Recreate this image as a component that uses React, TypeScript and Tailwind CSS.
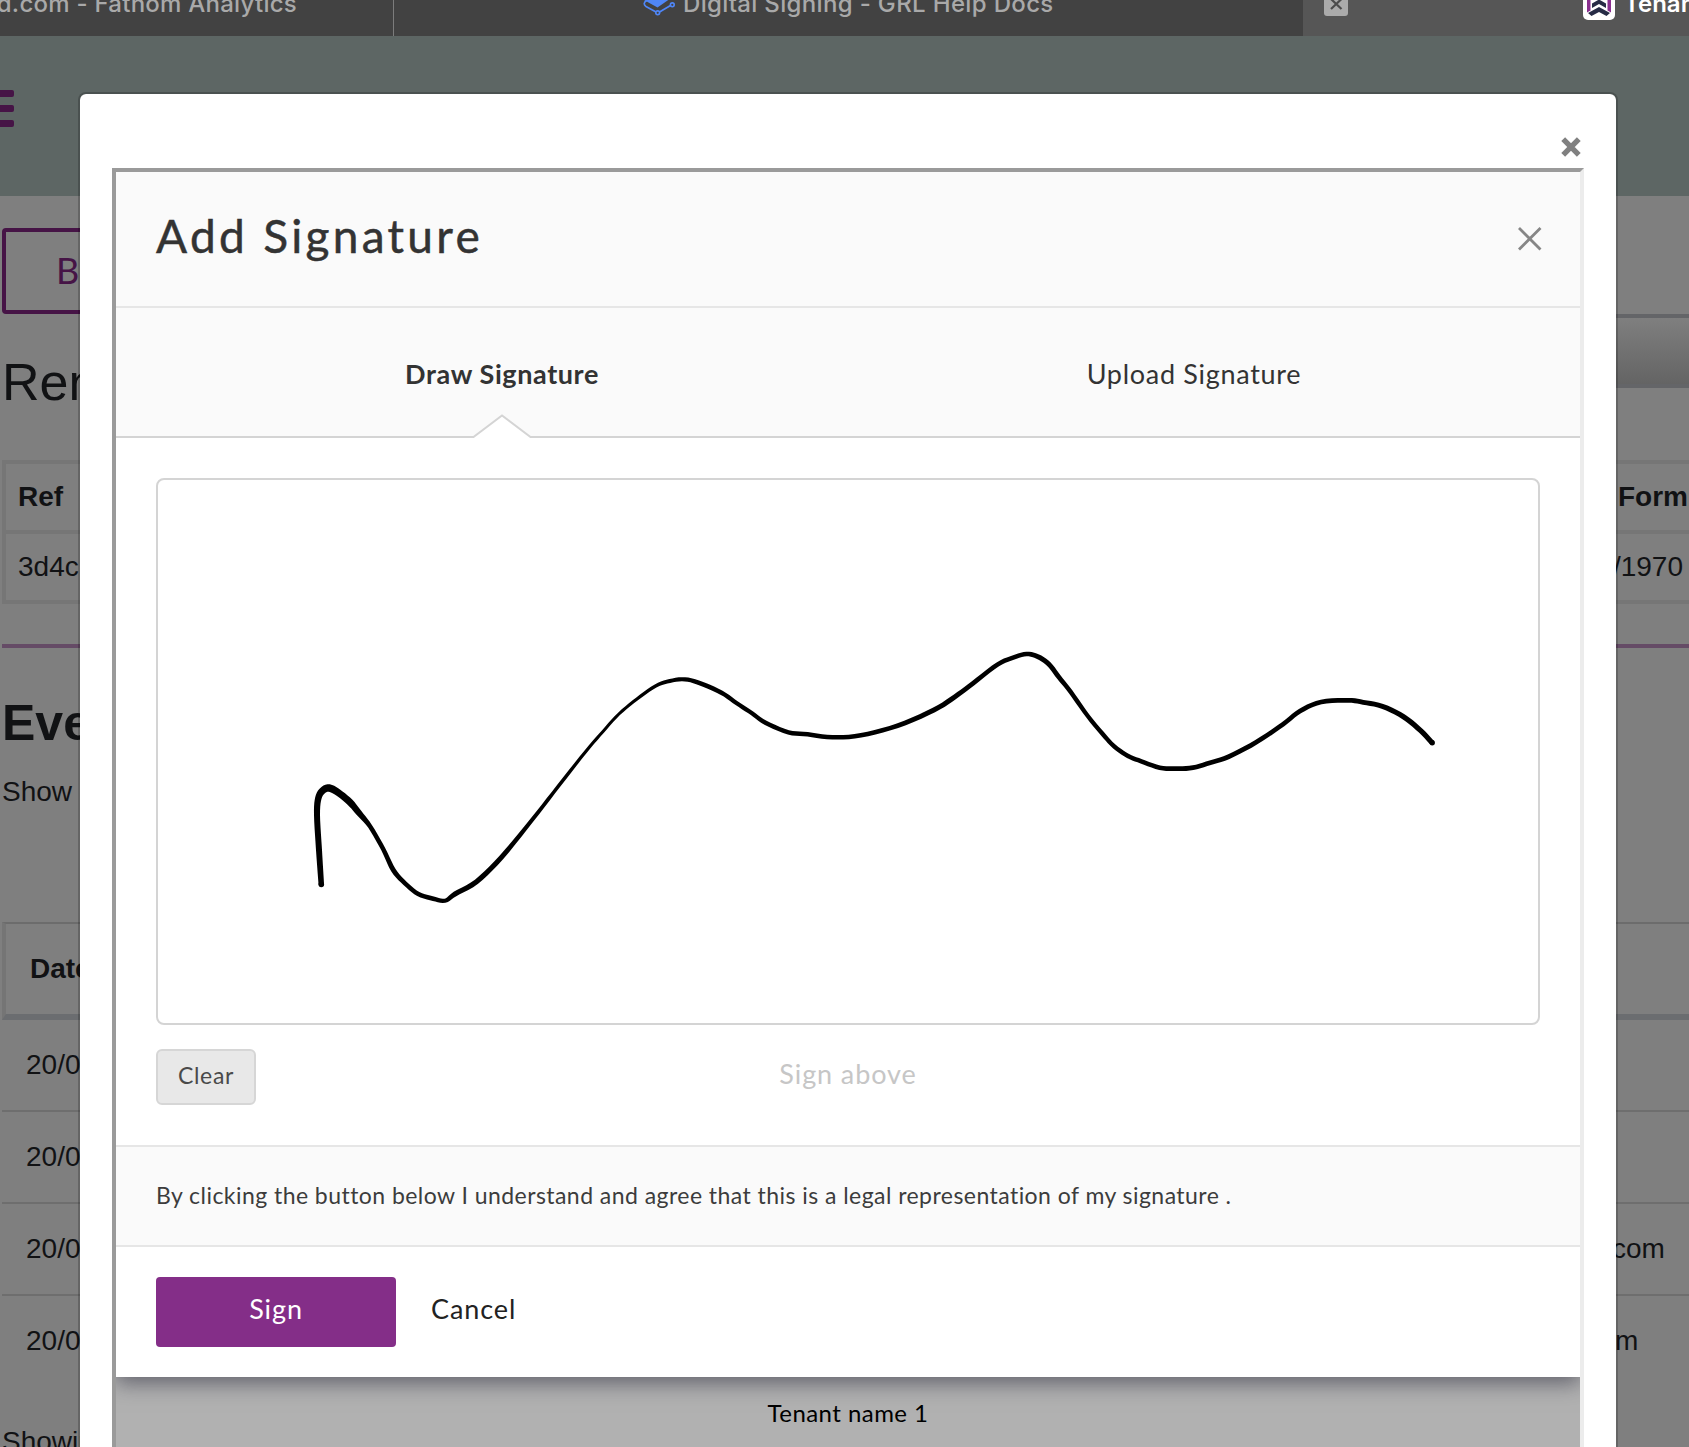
import React from "react";

type Point = [number, number, number];

// x, y and pen width along the signature, in canvas coordinates
const STROKE: Point[] = [
  [321.3, 884.5, 5.5], [319, 850, 6], [317, 815, 6], [318.3, 798.3, 6.5], [322.7, 790.5, 7], [329.3, 788, 7.5],
  [338.3, 792.7, 7], [350, 802.3, 7], [359.3, 813.3, 6], [370, 826.3, 4.5], [383.3, 849.3, 4.5], [393.3, 870, 5],
  [405, 883.3, 4.5], [418.3, 894, 4.5], [433.3, 898.7, 4.5], [445, 900.7, 4], [455, 894, 5], [476.5, 881.7, 5.2],
  [501.4, 857.3, 5], [532, 820, 4], [558.8, 785.7, 3.5], [585.6, 751.7, 3.2], [602.8, 731.7, 3], [618.9, 714, 3],
  [637.3, 698.7, 3.2], [655.6, 686, 3.5], [669.8, 681, 4], [685, 679.3, 4.2], [700.4, 683.3, 4.5], [721.5, 692.7, 4.5],
  [736.8, 703.3, 4.2], [752, 713.3, 4.2], [765.5, 722.7, 4.5], [788.4, 732.3, 4.5], [807.6, 734.3, 4.5], [832.4, 737.3, 4.5],
  [861, 735.3, 4.5], [897.5, 725.7, 4.7], [933.9, 710, 5], [955, 696.7, 5], [973, 683.3, 4.7], [997.8, 664.3, 4.5],
  [1013.1, 657.7, 4.5], [1026.5, 654, 4.5], [1038, 656.7, 5], [1048.7, 664, 5], [1059, 677.3, 4.7], [1070.5, 691.7, 4.5],
  [1087.8, 716, 4.3], [1105, 736.7, 4.4], [1114.6, 746.7, 4.4], [1128, 756, 4.5], [1141.3, 761.3, 4.5], [1159.7, 767.7, 4.5],
  [1175.8, 768.7, 4.8], [1193, 767.7, 4.8], [1210.2, 762.7, 4.8], [1228.6, 756.7, 4.8], [1256.1, 742.3, 4.8], [1282.9, 724.3, 4.7],
  [1300.1, 711, 4.7], [1321.2, 702, 4.7], [1348, 700.3, 4.8], [1363.3, 702.3, 4.9], [1382.4, 706.3, 5], [1403.5, 716.7, 5.2],
  [1420.7, 730.7, 5.2], [1432.2, 742.8, 5.2],
];

function catmull(a: number, b: number, c: number, d: number, t: number) {
  return 0.5 * (2 * b + (c - a) * t + (2 * a - 5 * b + 4 * c - d) * t * t + (3 * b - a - 3 * c + d) * t * t * t);
}

// Builds the outline of a stroke whose width changes along its length
function ribbon(points: Point[]) {
  const samples: Point[] = [];
  for (let i = 0; i < points.length - 1; i++) {
    const p0 = points[Math.max(0, i - 1)];
    const p1 = points[i];
    const p2 = points[i + 1];
    const p3 = points[Math.min(points.length - 1, i + 2)];
    for (let s = 0; s < 5; s++) {
      const t = s / 5;
      samples.push([
        catmull(p0[0], p1[0], p2[0], p3[0], t),
        catmull(p0[1], p1[1], p2[1], p3[1], t),
        p1[2] + (p2[2] - p1[2]) * t,
      ]);
    }
  }
  samples.push(points[points.length - 1]);
  const left: string[] = [];
  const right: string[] = [];
  samples.forEach((p, i) => {
    const a = samples[Math.max(0, i - 1)];
    const b = samples[Math.min(samples.length - 1, i + 1)];
    const dx = b[0] - a[0];
    const dy = b[1] - a[1];
    const len = Math.hypot(dx, dy) || 1;
    const nx = (-dy / len) * (p[2] / 2);
    const ny = (dx / len) * (p[2] / 2);
    left.push(`${(p[0] + nx).toFixed(2)} ${(p[1] + ny).toFixed(2)}`);
    right.unshift(`${(p[0] - nx).toFixed(2)} ${(p[1] - ny).toFixed(2)}`);
  });
  return `M${left.join("L")}L${right.join("L")}Z`;
}

function BrowserTabs() {
  return (
    <div className="flex h-9 overflow-hidden whitespace-nowrap bg-[#424242] font-['Inter',sans-serif] text-[24px] font-medium leading-9 text-[#a9a9a9]">
      <div className="flex w-[394px] shrink-0 justify-end border-r border-[#7c7c7c] pr-24">
        <span className="-mt-[14px] tracking-[0.25px]">d.com - Fathom Analytics</span>
      </div>
      <div className="flex w-[909px] shrink-0 pl-[249px]">
        <svg className="h-4 w-8 shrink-0" viewBox="0 0 32 16" fill="none">
          <path d="M1 -4H31L14.500 7.500L1 0Z" fill="#4f86f7" />
          <path d="M4 0.500C0.500 2 0.500 5 3 6.500L13 12M16.500 12L27.500 5.500" stroke="#4f86f7" strokeWidth="1.700" />
          <circle cx="14.700" cy="12.800" r="1.900" stroke="#4f86f7" strokeWidth="1.600" />
          <circle cx="29.300" cy="4.800" r="1.900" stroke="#4f86f7" strokeWidth="1.600" />
        </svg>
        <span className="-mt-[14px] ml-2 tracking-[0.34px]">Digital Signing - GRL Help Docs</span>
      </div>
      <div className="flex flex-1 bg-[#565656] pl-[21px] text-white">
        <svg className="h-4 w-6 shrink-0" viewBox="0 0 24 16">
          <rect y="-8" width="24" height="24" rx="3" fill="#ababab" />
          <path d="M7 -1L17.500 9M17.500 -1L7 9" stroke="#4c4c4c" strokeWidth="2.200" />
        </svg>
        <svg className="ml-[235px] h-5 w-8 shrink-0" viewBox="0 0 32 20">
          <rect y="-12" width="32" height="32" rx="5" fill="#fff" />
          <path d="M4 -2H28V12.500L24.500 10.500V0H7.500V10.500L4 12.500Z" fill="#8a2f8f" />
          <path d="M9 3.500L16 -0.500L23 3.500V8L16 4L9 8Z" fill="#262b45" />
          <path d="M5 13L16 7L27 13L23.500 16L16 12L8.500 16Z" fill="#262b45" />
        </svg>
        <span className="-mt-[14px] ml-[9px] font-semibold">Tenant</span>
      </div>
    </div>
  );
}

function BackgroundPage() {
  const rows = ["", "", "com"];
  return (
    <div className="h-[1447px] w-full overflow-hidden bg-[#7f7f7f] font-['Liberation_Sans',Arial,sans-serif] text-[28px] text-[#111214]">
      <BrowserTabs />
      <div className="flex h-40 flex-col bg-[#5d6664] pt-[53.500px]">
        <div className="mb-2 h-[7px] w-[14px] rounded-r-[2px] bg-[#461446]" />
        <div className="mb-2 h-[7px] w-[14px] rounded-r-[2px] bg-[#461446]" />
        <div className="h-[7px] w-[14px] rounded-r-[2px] bg-[#461446]" />
      </div>
      <div className="flex h-[264px] justify-between pl-0.5">
        <div>
          <div className="mt-8 flex h-[86px] w-[220px] items-center rounded border-4 border-[#461446] pb-0.5 pl-[50px] font-['Lato',sans-serif] text-[36px] tracking-[3px] text-[#461446]">
            Back
          </div>
          <div className="mt-[38px] text-[52px] leading-[60px]">Rent</div>
        </div>
        <div className="mt-[118px] h-[74px] w-[400px] border-y-4 border-[#646568] bg-linear-to-b from-[#7f7f7f] to-[#646464]" />
      </div>
      <div className="ml-0.5 border-4 border-r-0 border-[#767676]">
        <div className="flex h-[66px] items-center justify-between pb-px pl-3 font-bold">
          <span>Ref</span>
          <span className="w-[71px]">Form</span>
        </div>
        <div className="flex h-[70px] items-center justify-between border-t-4 border-[#767676] pb-px pl-3">
          <span>3d4c</span>
          <span className="pr-1.5">/1970</span>
        </div>
      </div>
      <div className="ml-0.5 mt-10 h-1 bg-[#654b66]" />
      <div className="mt-[45px] pl-0.5 text-[50px] font-bold leading-[60px]">Events</div>
      <div className="mt-[23px] pl-0.5 leading-8">Show</div>
      <div className="ml-0.5 mt-[114px] flex h-[98px] items-center border-b-[6px] border-l-4 border-t-2 border-b-[#6b6d70] border-l-[#757575] border-t-[#6c6c6c] pb-px pl-6 font-bold">
        Date
      </div>
      {rows.map((tail, i) => (
        <div key={i} className="ml-0.5 flex h-[92px] items-center border-b-2 border-[#6e6e6e] pb-px pl-6">
          <span className="w-[1586px]">20/0</span>
          <span>{tail}</span>
        </div>
      ))}
      <div className="ml-0.5 flex h-[92px] items-center pb-0.5 pl-6">
        <span className="w-[1589px]">20/0</span>
        <span>m</span>
      </div>
      <div className="mt-[38px] pl-0.5 leading-8">Showing</div>
    </div>
  );
}

function SignaturePanel() {
  return (
    <div className="relative h-[1205px] bg-white text-[#333] shadow-[0_6px_20px_0_rgba(20,20,40,0.5)]">
      <div className="flex h-[136px] justify-between border-b-2 border-[#e6e6e6] bg-[#fafafa] pl-10 pr-[38px]">
        <h1 className="mt-[34px] text-[46px] leading-[60px] tracking-[3.300px] [-webkit-text-stroke:0.5px_#333]">Add Signature</h1>
        <svg className="mt-[55px] h-6 w-6" viewBox="0 0 24 24" fill="none" stroke="#868686" strokeWidth="2.800">
          <path d="M1 1L22.500 22.500M22.500 1L1 22.500" />
        </svg>
      </div>
      <div className="relative grid h-[130px] grid-cols-2 border-b-2 border-[#d4d4d4] bg-[#fafafa] px-10 pt-px text-center text-[27px] leading-[130px]">
        <div className="font-bold tracking-[0.6px]">Draw Signature</div>
        <div className="tracking-[0.7px]">Upload Signature</div>
        <svg className="absolute -bottom-0.5 left-[356px] h-6 w-[60px]" viewBox="0 0 60 24">
          <path d="M1.500 23.500L30 1L58.500 23.500V24H1.500Z" fill="#fff" />
          <path d="M0 23L1.500 23L30 1.500L58.500 23L60 23" fill="none" stroke="#d4d4d4" strokeWidth="2" />
        </svg>
      </div>
      <div className="px-10 pt-10">
        <div className="h-[547px] rounded-lg border-2 border-[#d4d4d4]">
          <svg className="h-full w-full" viewBox="158 480 1380 543">
            <path d={ribbon(STROKE)} fill="#000" />
            <circle cx="321.300" cy="884.500" r="2.800" />
            <circle cx="1432.200" cy="742.800" r="2.700" />
          </svg>
        </div>
      </div>
      <div className="mt-6 grid h-24 grid-cols-[1fr_auto_1fr] items-start px-10">
        <button className="h-14 w-[100px] rounded-md border-2 border-[#d6d6d6] bg-[#e8e8e8] pb-1 text-[23px] tracking-[0.7px] text-[#4a4a4a]">
          Clear
        </button>
        <span className="text-[27px] leading-[49px] tracking-[0.9px] text-[#c6c6c6]">Sign above</span>
      </div>
      <div className="h-[102px] border-y-2 border-[#e6e6e6] bg-[#fafafa] px-10 text-[23px] leading-[96px] tracking-[0.45px] text-[#3c3c3c]">
        By clicking the button below I understand and agree that this is a legal representation of my signature .
      </div>
      <div className="flex gap-[35px] px-10 pt-[30px] text-[27px] tracking-[0.9px]">
        <button className="h-[70px] w-60 rounded bg-[#842e88] pb-[5px] text-white">Sign</button>
        <button className="h-[70px] pb-[5px] text-[#222]">Cancel</button>
      </div>
    </div>
  );
}

export default function App() {
  return (
    <div className="relative h-[1447px] w-[1689px] overflow-hidden">
      <BackgroundPage />
      <div className="absolute left-[78px] top-[92px] h-[1400px] w-[1540px] rounded-lg border-2 border-black/20 bg-white bg-clip-padding px-8 font-['Lato',sans-serif]">
        <div className="flex h-[74px] justify-end pr-[3px] pt-[43px]">
          <svg className="h-5 w-5" viewBox="0 0 20 20" stroke="#808080" strokeWidth="5.400">
            <path d="M2.200 2.200L17.800 17.800M17.800 2.200L2.200 17.800" />
          </svg>
        </div>
        <div className="h-[1310px] overflow-hidden border-4 border-b-[#ececec] border-l-[#9a9a9a] border-r-[#ececec] border-t-[#9a9a9a] bg-[#b1b1b1]">
          <SignaturePanel />
          <div className="pt-5 text-center text-[24px] leading-8 tracking-[0.45px] text-black">Tenant name 1</div>
        </div>
      </div>
    </div>
  );
}
